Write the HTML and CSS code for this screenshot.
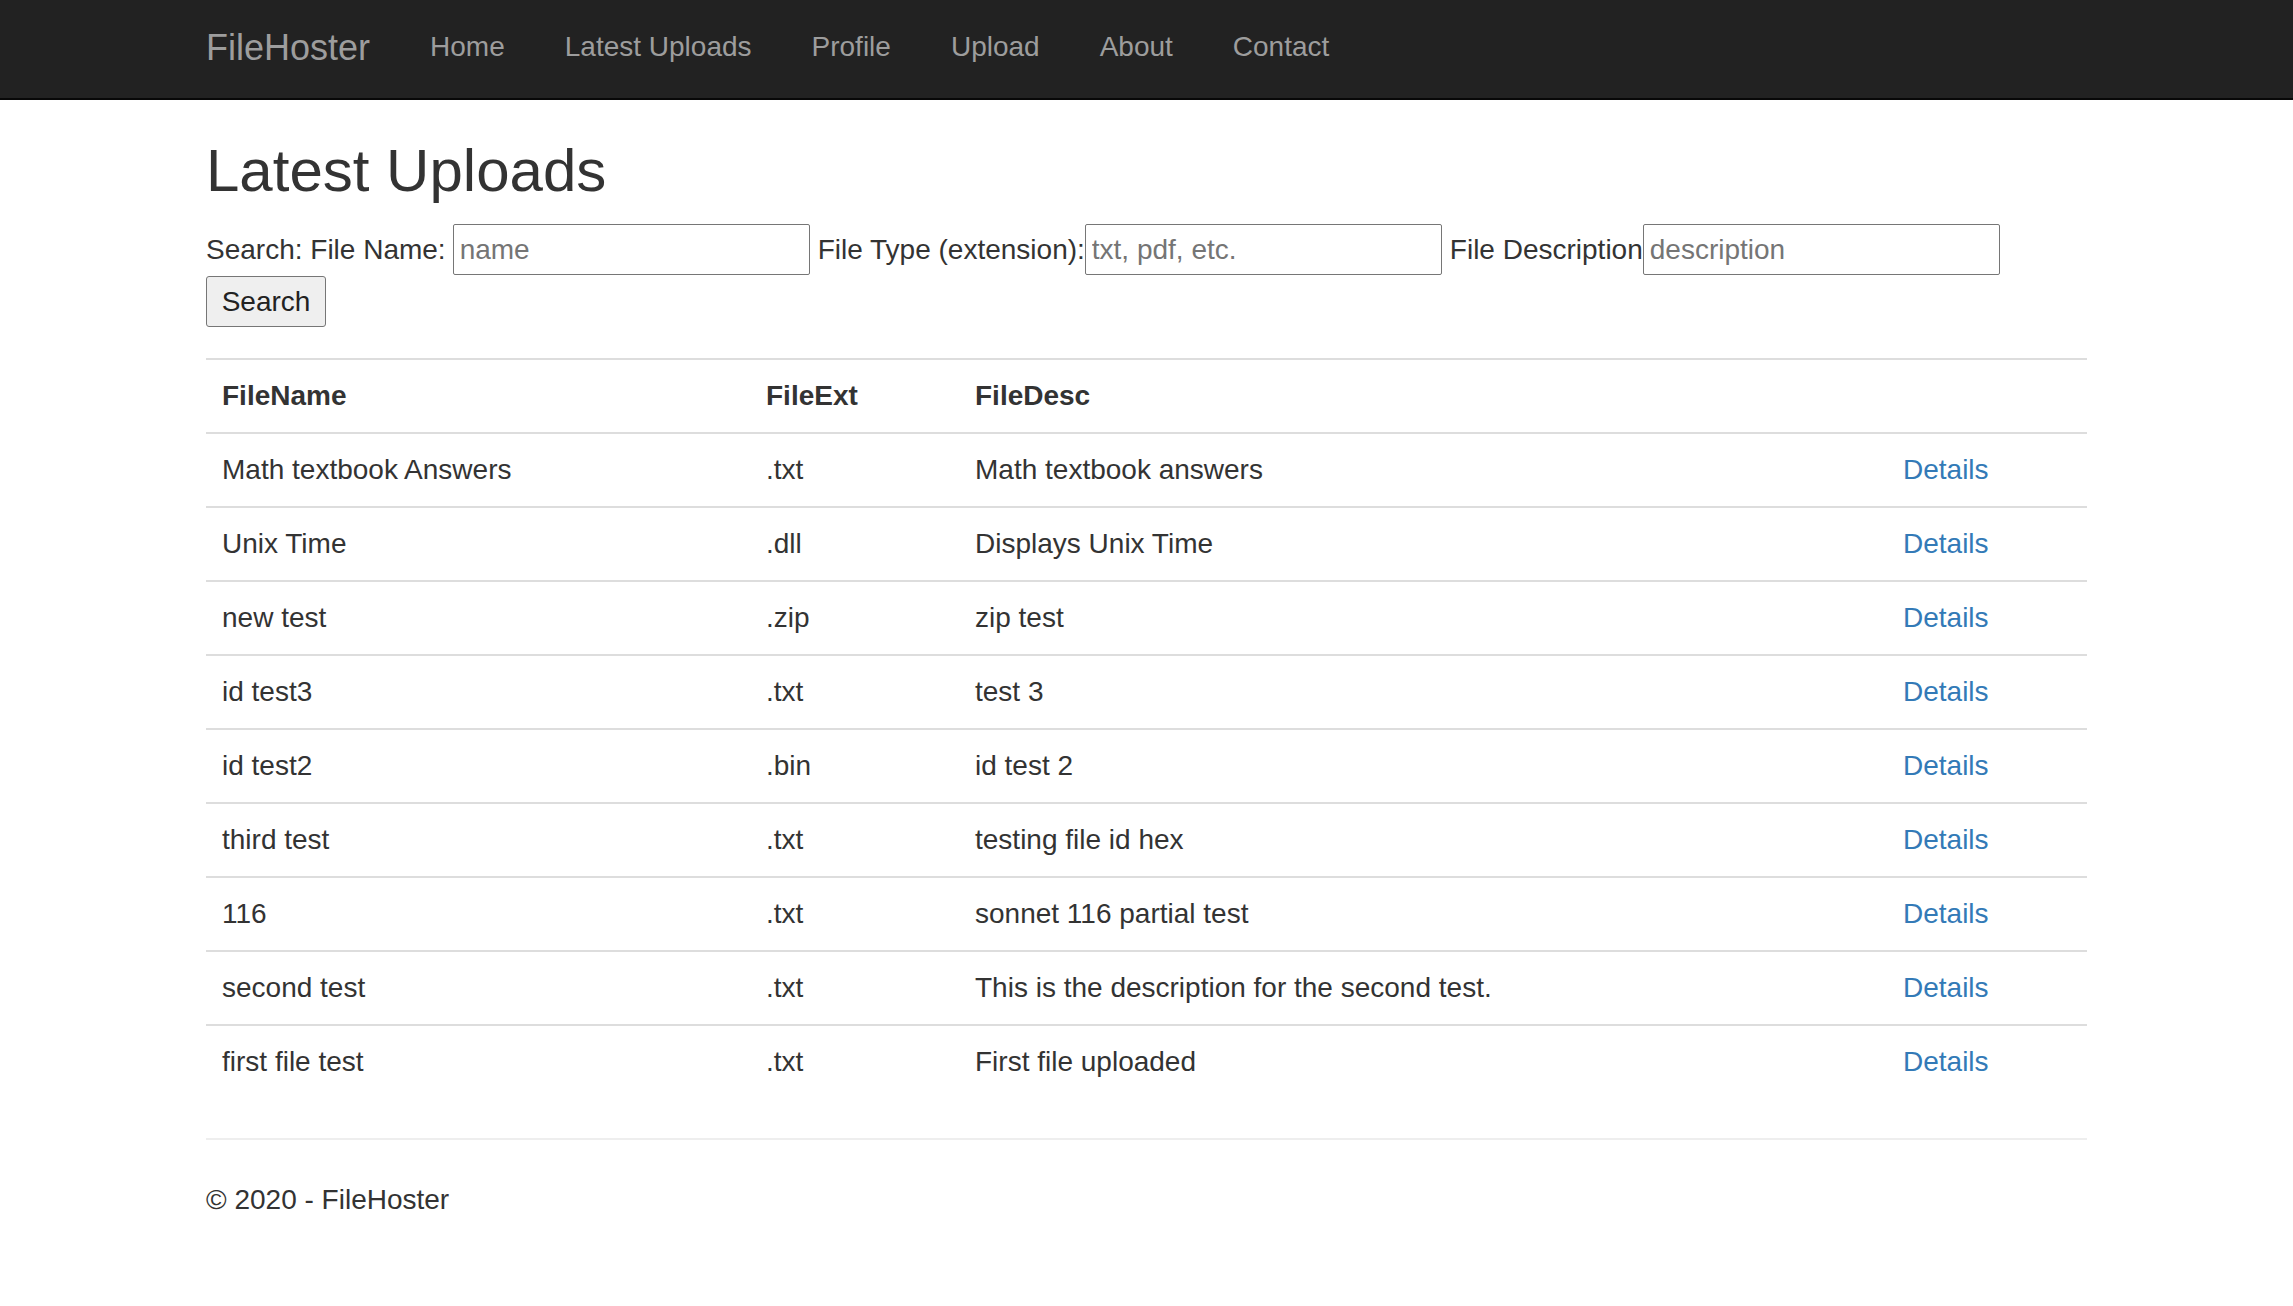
FILE: index.html
```html
<!DOCTYPE html>
<html lang="en">
<head>
<meta charset="utf-8">
<title>Latest Uploads - FileHoster</title>
<link rel="stylesheet" href="styles.css">
</head>
<body>
<nav class="navbar">
  <div class="container nav-inner">
    <a class="brand" href="#">FileHoster</a>
    <ul class="nav">
      <li><a href="#">Home</a></li>
      <li><a href="#">Latest Uploads</a></li>
      <li><a href="#">Profile</a></li>
      <li><a href="#">Upload</a></li>
      <li><a href="#">About</a></li>
      <li><a href="#">Contact</a></li>
    </ul>
  </div>
</nav>
<main class="container body-content">
  <h2 class="title">Latest Uploads</h2>
  <form class="search-form">
    <span class="lbl lbl-gap">Search: File Name:</span>
    <input class="field field-gap" type="text" placeholder="name">
    <span class="lbl">File Type (extension):</span>
    <input class="field field-gap" type="text" placeholder="txt, pdf, etc.">
    <span class="lbl">File Description</span>
    <input class="field" type="text" placeholder="description">
    <button class="btn" type="button">Search</button>
  </form>
  <table class="table">
    <colgroup>
      <col class="c1"><col class="c2"><col class="c3"><col class="c4">
    </colgroup>
    <tr><th>FileName</th><th>FileExt</th><th>FileDesc</th><th></th></tr>
    <tr><td>Math textbook Answers</td><td>.txt</td><td>Math textbook answers</td><td><a href="#">Details</a></td></tr>
    <tr><td>Unix Time</td><td>.dll</td><td>Displays Unix Time</td><td><a href="#">Details</a></td></tr>
    <tr><td>new test</td><td>.zip</td><td>zip test</td><td><a href="#">Details</a></td></tr>
    <tr><td>id test3</td><td>.txt</td><td>test 3</td><td><a href="#">Details</a></td></tr>
    <tr><td>id test2</td><td>.bin</td><td>id test 2</td><td><a href="#">Details</a></td></tr>
    <tr><td>third test</td><td>.txt</td><td>testing file id hex</td><td><a href="#">Details</a></td></tr>
    <tr><td>116</td><td>.txt</td><td>sonnet 116 partial test</td><td><a href="#">Details</a></td></tr>
    <tr><td>second test</td><td>.txt</td><td>This is the description for the second test.</td><td><a href="#">Details</a></td></tr>
    <tr><td>first file test</td><td>.txt</td><td>First file uploaded</td><td><a href="#">Details</a></td></tr>
  </table>
  <hr class="rule">
  <footer class="footer">
    <p class="copy">&copy; 2020 - FileHoster</p>
  </footer>
</main>
</body>
</html>
```
FILE: styles.css
```css
* { box-sizing: border-box; }

html, body {
  margin: 0;
  padding: 0;
}

body {
  font-family: "Liberation Sans", Arial, Helvetica, sans-serif;
  font-size: 28px;
  line-height: 40px;
  color: #333333;
  background: #ffffff;
  padding-bottom: 40px;
}

a { text-decoration: none; }

.container {
  width: 1881px;
  margin: 0 auto;
}

/* navbar */
.navbar {
  background: #222222;
  border-bottom: 2px solid #080808;
  height: 100px;
}

.nav-inner {
  display: flex;
  align-items: flex-start;
  height: 98px;
}

.brand {
  display: block;
  color: #9d9d9d;
  font-size: 36px;
  line-height: 40px;
  padding: 28px 30px 0 0;
}

.nav {
  display: flex;
  list-style: none;
  margin: 0;
  padding: 0;
}

.nav a {
  display: block;
  color: #9d9d9d;
  font-size: 28px;
  line-height: 40px;
  padding: 27px 30px 0;
}

/* title */
.title {
  font-size: 60px;
  font-weight: 500;
  line-height: 66px;
  margin: 38px 0 20px;
}

/* form */
.search-form {
  display: flex;
  flex-wrap: wrap;
  align-items: center;
  row-gap: 1px;
  margin: 0;
}

.lbl {
  line-height: 40px;
  white-space: nowrap;
}

.lbl-gap { margin-right: 7px; }

.field {
  width: 357px;
  height: 51px;
  border: 1px solid #767676;
  border-radius: 2px;
  padding: 2px 6px;
  font-family: inherit;
  font-size: 28px;
  color: #333333;
  background: #ffffff;
}

.field::placeholder { color: #757575; }

.field-gap { margin-right: 8px; }

.btn {
  height: 51px;
  width: 120px;
  padding: 0;
  font-family: inherit;
  font-size: 28px;
  color: #222222;
  background: #efefef;
  border: 1px solid #767676;
  border-radius: 3px;
}

/* table */
.table {
  width: 1881px;
  table-layout: fixed;
  border-collapse: collapse;
  border-spacing: 0;
  margin: 31px 0 40px;
}

.c1 { width: 544px; }
.c2 { width: 209px; }
.c3 { width: 928px; }
.c4 { width: 200px; }

.table th,
.table td {
  text-align: left;
  vertical-align: top;
  padding: 16px;
  line-height: 40px;
  border-top: 2px solid #dddddd;
}

.table th { font-weight: bold; }

.table a { color: #337ab7; }

/* footer */
.rule {
  border: 0;
  border-top: 2px solid #eeeeee;
  margin: 0 0 40px;
  height: 0;
}

.copy {
  margin: 0 0 20px;
}
```
